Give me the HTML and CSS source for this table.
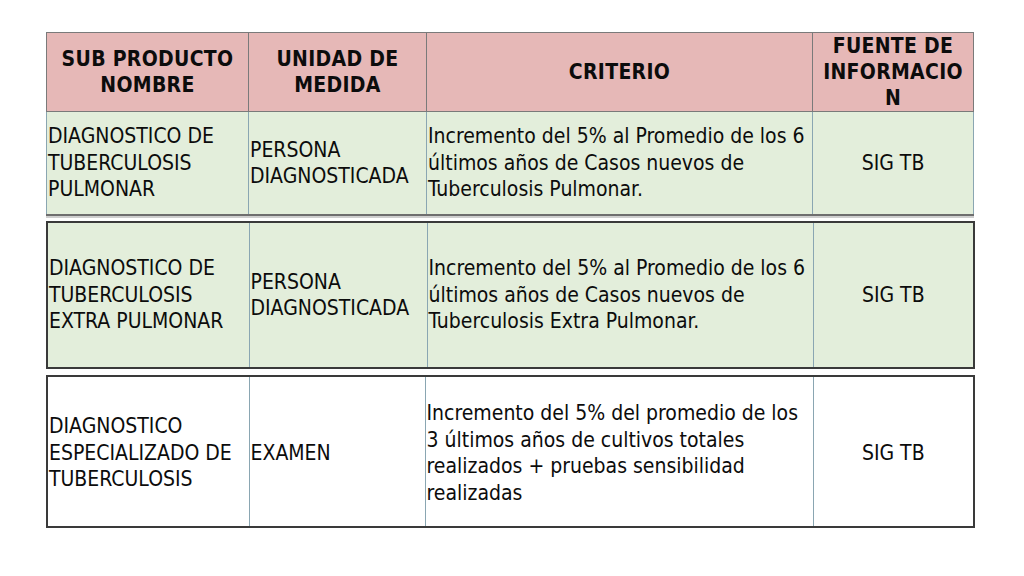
FILE: index.html
```html
<!DOCTYPE html>
<html lang="es">
<head>
<meta charset="utf-8">
<link rel="stylesheet" href="styles.css">
</head>
<body>
<main class="page">
  <table class="tbl tbl-first">
    <colgroup><col class="c1"><col class="c2"><col class="c3"><col class="c4"></colgroup>
    <tr class="head">
      <th>SUB PRODUCTO NOMBRE</th>
      <th>UNIDAD DE MEDIDA</th>
      <th>CRITERIO</th>
      <th>FUENTE DE<br>INFORMACIO<br>N</th>
    </tr>
    <tr class="row green r1">
      <td>DIAGNOSTICO DE TUBERCULOSIS PULMONAR</td>
      <td>PERSONA DIAGNOSTICADA</td>
      <td>Incremento del 5% al Promedio de los 6 últimos años de Casos nuevos de Tuberculosis Pulmonar.</td>
      <td class="src">SIG TB</td>
    </tr>
  </table>

  <table class="tbl tbl-dark">
    <colgroup><col class="c1"><col class="c2"><col class="c3"><col class="c4"></colgroup>
    <tr class="row green r2">
      <td>DIAGNOSTICO DE TUBERCULOSIS EXTRA PULMONAR</td>
      <td>PERSONA DIAGNOSTICADA</td>
      <td>Incremento del 5% al Promedio de los 6 últimos años de Casos nuevos de Tuberculosis Extra Pulmonar.</td>
      <td class="src">SIG TB</td>
    </tr>
  </table>

  <table class="tbl tbl-dark tbl-white">
    <colgroup><col class="c1"><col class="c2w"><col class="c3w"><col class="c4"></colgroup>
    <tr class="row r3">
      <td>DIAGNOSTICO ESPECIALIZADO DE TUBERCULOSIS</td>
      <td>EXAMEN</td>
      <td>Incremento del 5% del promedio de los 3 últimos años de cultivos totales realizados + pruebas sensibilidad realizadas</td>
      <td class="src">SIG TB</td>
    </tr>
  </table>
</main>
</body>
</html>
```
FILE: styles.css
```css
html, body {
  margin: 0;
  padding: 0;
  background: #ffffff;
}

body {
  font-family: "DejaVu Sans Condensed", "DejaVu Sans", "Liberation Sans", sans-serif;
  color: #0c0c0c;
}

.page {
  width: 927px;
  padding: 32px 0 0 46px;
  display: flex;
  flex-direction: column;
  gap: 5px;
}

.tbl {
  width: 927px;
  border-collapse: collapse;
  table-layout: fixed;
}

.c1 { width: 202px; }
.c2 { width: 178px; }
.c3 { width: 386px; }
.c4 { width: 161px; }
.c2w { width: 176px; }
.c3w { width: 388px; }

.tbl th,
.tbl td {
  padding: 0 1px;
  vertical-align: middle;
  border-left: 1px solid #8aa6b2;
  border-right: 1px solid #8aa6b2;
}

.head th {
  height: 77px;
  background: #e6b8b7;
  font-size: 21px;
  line-height: 26px;
  font-weight: bold;
  letter-spacing: 0.3px;
  text-align: center;
  border-color: #7a7a7a;
  padding: 0 1px;
}

.row td {
  font-size: 21px;
  line-height: 26.5px;
  text-align: left;
}

.green td {
  background: #e3eedb;
}

.row td.src {
  text-align: center;
}

.tbl-first {
  border: 1px solid #7a7a7a;
  border-bottom: 2px solid #6e6e6e;
  box-shadow: 0 2px 0 #cfcfcf;
}

.tbl-first .head th {
  border-bottom: 1px solid #7a7a7a;
}

.tbl-first .r1 td {
  height: 102px;
}

.tbl-dark {
  border: 2px solid #3a3a3a;
}

.tbl-dark td.src {
  border-left: 1px solid #3a3a3a;
}

.r2 td {
  height: 144px;
}

.tbl-white {
  margin-top: 1px;
}

.r3 td {
  height: 146px;
  padding-top: 3px;
}

.tbl-white td {
  background: #ffffff;
}
```
